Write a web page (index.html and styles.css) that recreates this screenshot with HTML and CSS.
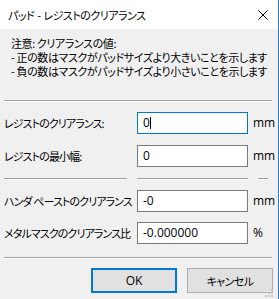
FILE: index.html
```html
<!DOCTYPE html>
<html lang="ja">
<head>
<meta charset="utf-8">
<title>パッド - レジストのクリアランス</title>
<link rel="stylesheet" href="styles.css">
</head>
<body>
<div class="window">
  <div class="titlebar">
    <span class="title">パッド - レジストのクリアランス</span>
    <svg class="close" width="10" height="10" viewBox="0 0 10 10"><path d="M0.5 0.5 L9.5 9.5 M9.5 0.5 L0.5 9.5" stroke="#000" stroke-width="1" fill="none"/></svg>
  </div>
  <div class="content">
    <div class="note">
      <div class="line">注意: クリアランスの値:</div>
      <div class="line">- 正の数はマスクがパッドサイズより大きいことを示します</div>
      <div class="line">- 負の数はマスクがパッドサイズより小さいことを示します</div>
    </div>
    <div class="sep sep-full"></div>
    <div class="row row1">
      <span class="label">レジストのクリアランス:</span>
      <span class="field focused"><span class="val">0</span><span class="caret"></span></span>
      <span class="unit">mm</span>
    </div>
    <div class="row row2">
      <span class="label">レジストの最小幅:</span>
      <span class="field"><span class="val">0</span></span>
      <span class="unit">mm</span>
    </div>
    <div class="seps">
      <div class="sep seg1"></div>
      <div class="sep seg2"></div>
      <div class="sep seg3"></div>
    </div>
    <div class="row row3">
      <span class="label">ハンダ ペーストのクリアランス</span>
      <span class="field"><span class="val">-0</span></span>
      <span class="unit">mm</span>
    </div>
    <div class="row row4">
      <span class="label">メタルマスクのクリアランス比</span>
      <span class="field"><span class="val">-0.000000</span></span>
      <span class="unit">%</span>
    </div>
    <div class="sep sep-full sep3"></div>
    <div class="buttons">
      <span class="btn btn-ok">OK</span>
      <span class="btn btn-cancel">キャンセル</span>
    </div>
    <svg class="grip" width="9" height="9" viewBox="0 0 9 9">
      <rect x="6" y="0" width="2" height="2" fill="#c4c4c4"/>
      <rect x="6" y="3" width="2" height="2" fill="#c4c4c4"/>
      <rect x="3" y="3" width="2" height="2" fill="#c4c4c4"/>
      <rect x="6" y="6" width="2" height="2" fill="#c4c4c4"/>
      <rect x="3" y="6" width="2" height="2" fill="#c4c4c4"/>
      <rect x="0" y="6" width="2" height="2" fill="#c4c4c4"/>
    </svg>
  </div>
</div>
</body>
</html>
```
FILE: styles.css
```css
html, body {
  margin: 0;
  padding: 0;
  background: #f0f0f0;
}
.window {
  width: 279px;
  height: 299px;
  box-sizing: border-box;
  border-right: 1px solid #1a7fd4;
  display: flex;
  flex-direction: column;
  font-family: "Noto Sans CJK JP", sans-serif;
  font-feature-settings: "palt";
  font-size: 11px;
  color: #000;
  overflow: hidden;
}
.titlebar {
  height: 29px;
  flex: none;
  background: #fff;
  display: flex;
  align-items: center;
  padding-left: 8px;
  padding-right: 10px;
}
.title {
  flex: 1;
  line-height: 14px;
  margin-top: 1px;
  letter-spacing: -0.5px;
  word-spacing: 1px;
}
.close {
  display: block;
}
.content {
  flex: 1;
  position: relative;
  background: #f0f0f0;
  display: flex;
  flex-direction: column;
}
.note {
  padding: 7px 0 0 11px;
  height: 42px;
  letter-spacing: -0.4px;
  white-space: nowrap;
}
.line {
  height: 14px;
  line-height: 14px;
}
.sep {
  height: 0;
  border-top: 1px solid #a0a0a0;
  border-bottom: 1px solid #ffffff;
}
.sep-full {
  margin-left: 4px;
  width: 268px;
  margin-top: 22px;
}
.row {
  display: flex;
  align-items: center;
  height: 22px;
  padding-left: 4px;
}
.row1 { margin-top: 10px; }
.row2 { margin-top: 11px; }
.row3 { margin-top: 10px; }
.row4 { margin-top: 10px; }
.label {
  width: 133px;
  flex: none;
  line-height: 14px;
  white-space: nowrap;
  letter-spacing: -0.9px;
}
.field {
  width: 111px;
  height: 22px;
  box-sizing: border-box;
  border: 1px solid #7a7a7a;
  background: #fff;
  display: flex;
  align-items: center;
  padding-left: 5px;
  flex: none;
}
.field.focused {
  border-color: #0078d7;
}
.val {
  font-family: "Open Sans", "Noto Sans", sans-serif;
  font-size: 12px;
  line-height: 14px;
}
.caret {
  width: 1px;
  height: 12px;
  background: #000;
}
.unit {
  padding-left: 5px;
  font-family: "Open Sans", "Noto Sans", sans-serif;
  font-size: 12px;
  line-height: 14px;
}
.seps {
  display: flex;
  margin-top: 11px;
  padding-left: 4px;
}
.seg1 { width: 123px; }
.seg2 { width: 111px; margin-left: 10px; }
.seg3 { width: 10px; margin-left: 10px; }
.sep3 {
  margin-top: 13px;
}
.buttons {
  display: flex;
  margin-top: 9px;
  padding-left: 91px;
  gap: 10px;
}
.btn {
  width: 86px;
  height: 25px;
  box-sizing: border-box;
  background: #e1e1e1;
  display: flex;
  align-items: center;
  justify-content: center;
  line-height: 14px;
}
.btn-ok {
  border: 2px solid #0078d7;
  font-family: "Open Sans", "Noto Sans", sans-serif;
  font-size: 12px;
}
.btn-cancel {
  border: 1px solid #adadad;
  letter-spacing: -0.6px;
}
.grip {
  position: absolute;
  right: 4px;
  bottom: 1px;
}
```
